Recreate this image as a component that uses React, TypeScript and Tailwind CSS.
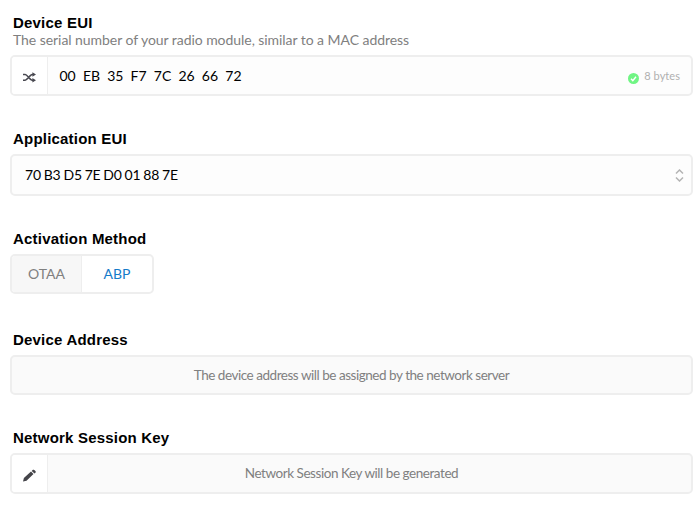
import { ReactNode } from "react";

function Label({ children }: { children: ReactNode }) {
  return (
    <h2 className="h-[18px] w-fit whitespace-nowrap pl-[3px] font-['Liberation_Sans',Arial,sans-serif] text-[15px] font-bold leading-[18px] tracking-[0.2px] text-black">
      {children}
    </h2>
  );
}

function ShuffleIcon() {
  return (
    <svg width="13" height="11" viewBox="0 0 13 11" fill="none" stroke="#484850" strokeWidth="1.6">
      <path d="M0 2.5h2.2c1.800 0 5 5.700 7 5.700h1M0 8.200h2.200c1.800 0 5-5.700 7-5.700h1" />
      <path d="M9.400.3 13 2.500 9.400 4.700zM9.400 6 13 8.200 9.400 10.400z" fill="#484850" stroke="none" />
    </svg>
  );
}

function PencilIcon() {
  return (
    <svg width="13" height="13" viewBox="0 0 13 13" fill="#45454a">
      <path d="M0 12.500l.9-3.500L8 2.500l2.500 2.500L3.500 11.700zM8.700 1.900l.9-.9c.5-.5 1.200-.5 1.700 0l1.100 1.100c.5.5.5 1.200 0 1.700l-.9.8z" />
    </svg>
  );
}

export default function App() {
  return (
    <main className="h-[521px] w-[696px] overflow-hidden bg-white pl-[10px] pt-[14px] font-[Lato,sans-serif] text-[14px]">
      <section className="h-[116px]">
        <Label>Device EUI</Label>
        <p className="h-[18px] w-fit whitespace-nowrap pl-[3px] leading-[16px] tracking-[-0.055px] text-[#808080]">
          The serial number of your radio module, similar to a MAC address
        </p>
        <div className="mt-[5px] flex h-[41px] w-[683px] items-stretch overflow-hidden rounded-[5px] border-2 border-[#eeeeee] bg-[#fdfdfd]">
          <div className="flex w-[36px] items-center justify-center border-r border-[#eeeeee] bg-white pt-[3px]">
            <ShuffleIcon />
          </div>
          <div className="flex flex-1 items-center whitespace-pre pl-[11.5px] text-black">
            <span>00  EB  35  F7  7C  26  66  72</span>
          </div>
          <div className="flex items-center gap-[5px] pr-[11px]">
            <svg className="mt-[5px]" width="11" height="11" viewBox="0 0 11 11">
              <circle cx="5.5" cy="5.5" r="5.5" fill="#70f584" />
              <path d="m3 5.8 1.8 1.8L8 3.7" fill="none" stroke="white" strokeWidth="1.4" />
            </svg>
            <span className="whitespace-nowrap pt-[2px] text-[11px] tracking-[0.05px] text-[#b0b0b0]">8 bytes</span>
          </div>
        </div>
      </section>

      <section className="h-[100px]">
        <Label>Application EUI</Label>
        <div className="mt-[6px] flex h-[42px] w-[683px] items-center justify-between rounded-[5px] border-2 border-[#eeeeee] bg-[#fdfdfd] pl-[13px] pr-[7px] text-black">
          <span className="whitespace-nowrap pb-[2px] tracking-[-0.15px] [word-spacing:-0.65px]">70 B3 D5 7E D0 01 88 7E</span>
          <svg width="9" height="13" viewBox="0 0 9 13" fill="none" stroke="#b4b4b4" strokeWidth="1.5">
            <path d="m1 4.5 3.5-3.5L8 4.5M1 8.5 4.500 12 8 8.500" />
          </svg>
        </div>
      </section>

      <section className="h-[101px]">
        <Label>Activation Method</Label>
        <div className="mt-[6px] flex h-[40px] w-[144px] overflow-hidden rounded-[5px] border-2 border-[#eeeeee] bg-white">
          <button className="w-[70px] border-r border-[#eeeeee] bg-[#f7f7f7] pb-[2px] text-[#808080]">OTAA</button>
          <button className="flex-1 pb-[2px] text-[#147bc9]">ABP</button>
        </div>
      </section>

      <section className="h-[98px]">
        <Label>Device Address</Label>
        <div className="mt-[6px] flex h-[40px] w-[683px] items-center justify-center rounded-[5px] border-2 border-[#eeeeee] bg-[#fafafa] text-[#808080]">
          <span className="whitespace-nowrap pt-[1px] text-[13.5px] tracking-[-0.47px]">The device address will be assigned by the network server</span>
        </div>
      </section>

      <section>
        <Label>Network Session Key</Label>
        <div className="mt-[6px] flex h-[41px] w-[683px] overflow-hidden rounded-[5px] border-2 border-[#eeeeee] bg-[#fafafa]">
          <div className="flex w-[36px] items-center justify-center border-r border-[#eeeeee] bg-white pt-[4px]">
            <PencilIcon />
          </div>
          <div className="flex w-[607px] items-center justify-center text-[#808080]">
            <span className="whitespace-nowrap text-[13.5px] tracking-[-0.45px]">Network Session Key will be generated</span>
          </div>
        </div>
      </section>
    </main>
  );
}
